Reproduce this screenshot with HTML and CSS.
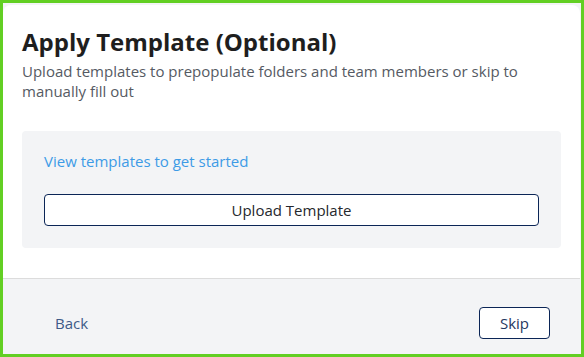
FILE: index.html
```html
<!DOCTYPE html>
<html lang="en">
<head>
  <meta charset="UTF-8">
  <meta name="viewport" content="width=device-width, initial-scale=1.0">
  <title>Apply Template</title>
  <link rel="stylesheet" href="styles.css">
</head>
<body>
  <div class="frame">
    <div class="modal">
      <div class="modal-body">
        <h2 class="title">Apply Template (Optional)</h2>
        <p class="subtitle">Upload templates to prepopulate folders and team members or skip to manually fill out</p>

        <div class="template-panel">
          <a href="#" class="template-link">View templates to get started</a>
          <button type="button" class="upload-btn">Upload Template</button>
        </div>
      </div>

      <div class="modal-footer">
        <button type="button" class="back-btn">Back</button>
        <button type="button" class="skip-btn">Skip</button>
      </div>
    </div>
  </div>
</body>
</html>
```

FILE: styles.css
```css
html, body {
  margin: 0;
  height: 100%;
}

body {
  font-family: "Open Sans", "Liberation Sans", sans-serif;
  background-color: #62cf23;
  padding: 3px;
  box-sizing: border-box;
}

.frame {
  height: 100%;
  background-color: #f3f4f6;
  padding-top: 2px;
  padding-right: 1px;
  box-sizing: border-box;
}

.modal {
  height: 100%;
  display: flex;
  flex-direction: column;
}

.modal-body {
  background-color: #fff;
  border-radius: 8px 8px 0 0;
  padding: 22px 19px 30px 19px;
  border-bottom: 1px solid #dcdcdc;
}

.title {
  margin: 0;
  font-size: 24px;
  line-height: 30px;
  font-weight: 700;
  color: #1e1e1e;
}

.subtitle {
  margin: 4px 0 0;
  font-size: 15px;
  line-height: 20px;
  color: #555a63;
}

.template-panel {
  margin-top: 30px;
  background-color: #f3f4f6;
  border-radius: 4px;
  padding: 20px 22px 22px;
  display: flex;
  flex-direction: column;
  align-items: flex-start;
}

.template-link {
  font-size: 15px;
  line-height: 20px;
  color: #3d9be6;
  text-decoration: none;
}

.upload-btn {
  margin-top: 23px;
  width: 100%;
  height: 32px;
  background-color: #fff;
  border: 1px solid #0b2556;
  border-radius: 4px;
  font-family: inherit;
  font-size: 15px;
  color: #26282d;
  cursor: pointer;
}

.modal-footer {
  flex: 1;
  display: flex;
  justify-content: space-between;
  align-items: flex-start;
  padding: 28px 30px 0 41px;
}

.back-btn {
  background: none;
  border: none;
  padding: 0 11px;
  height: 32px;
  font-family: inherit;
  font-size: 15px;
  color: #3e5a87;
  cursor: pointer;
}

.skip-btn {
  width: 71px;
  height: 32px;
  background-color: #fff;
  border: 1px solid #0b2556;
  border-radius: 4px;
  font-family: inherit;
  font-size: 15px;
  color: #1f3760;
  cursor: pointer;
}
```
